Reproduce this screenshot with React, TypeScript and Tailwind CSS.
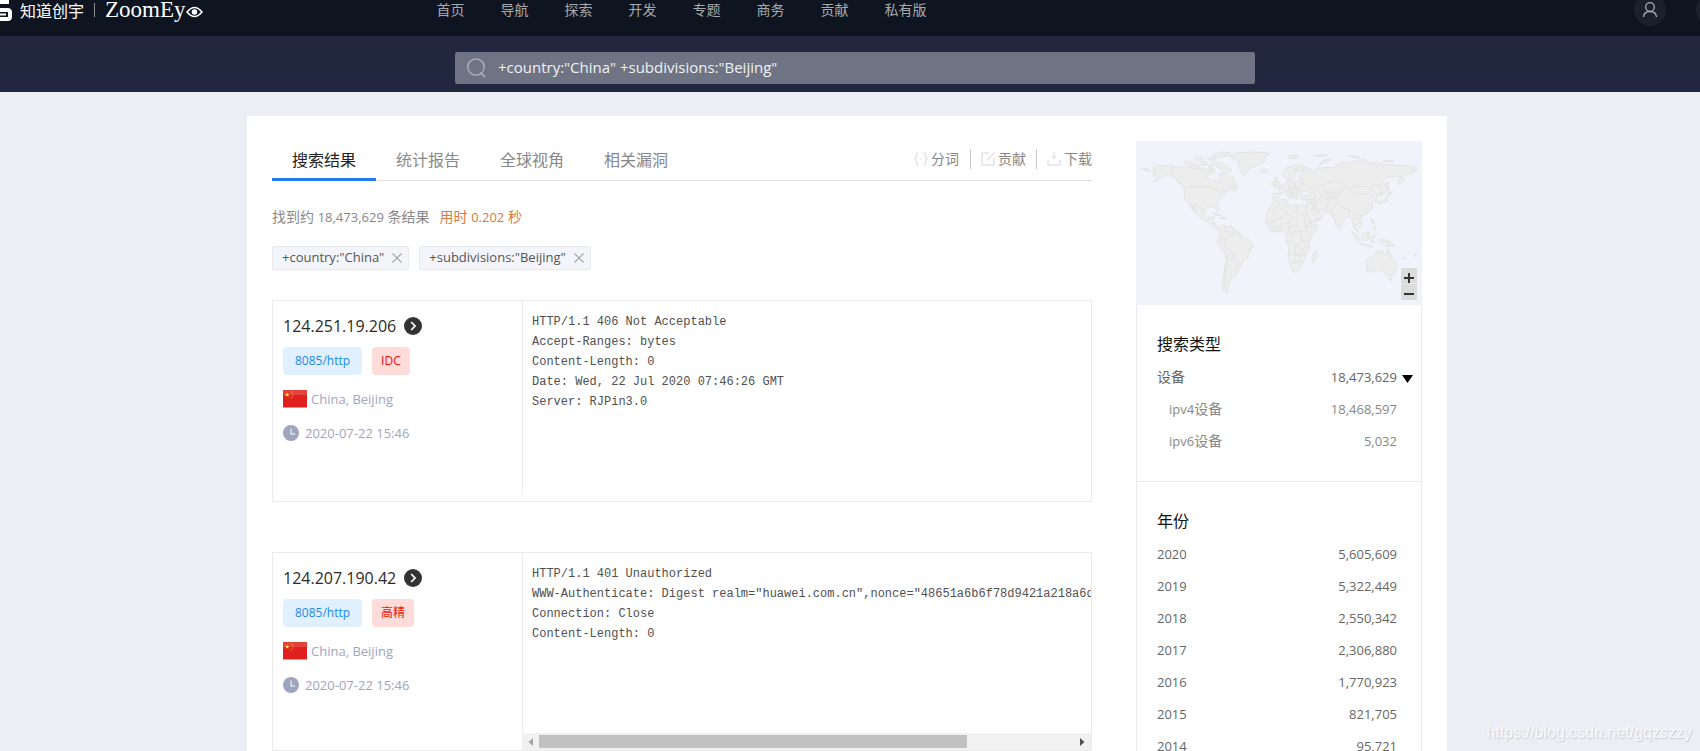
import { useState } from "react";
import type { ReactNode } from "react";

const navItems = ["首页", "导航", "探索", "开发", "专题", "商务", "贡献", "私有版"];
const tabs = ["搜索结果", "统计报告", "全球视角", "相关漏洞"];

interface Host {
  ip: string;
  port: string;
  label: string;
  location: string;
  time: string;
  banner: string;
  wide?: boolean;
}

const hosts: Host[] = [
  {
    ip: "124.251.19.206",
    port: "8085/http",
    label: "IDC",
    location: "China, Beijing",
    time: "2020-07-22 15:46",
    banner: `HTTP/1.1 406 Not Acceptable
Accept-Ranges: bytes
Content-Length: 0
Date: Wed, 22 Jul 2020 07:46:26 GMT
Server: RJPin3.0`,
  },
  {
    ip: "124.207.190.42",
    port: "8085/http",
    label: "高精",
    location: "China, Beijing",
    time: "2020-07-22 15:46",
    banner: `HTTP/1.1 401 Unauthorized
WWW-Authenticate: Digest realm="huawei.com.cn",nonce="48651a6b6f78d9421a218a6de2
Connection: Close
Content-Length: 0`,
    wide: true,
  },
];

const years = [
  { year: "2020", count: "5,605,609" },
  { year: "2019", count: "5,322,449" },
  { year: "2018", count: "2,550,342" },
  { year: "2017", count: "2,306,880" },
  { year: "2016", count: "1,770,923" },
  { year: "2015", count: "821,705" },
  { year: "2014", count: "95,721" },
];

function Header() {
  return (
    <header className="h-9 overflow-hidden bg-[#0e1521]">
      <div className="flex h-5 items-center">
        <a href="#" className="flex shrink-0 items-center text-white">
          <svg width="13" height="21" viewBox="0 0 13 21" fill="none" stroke="#fff" strokeWidth="4" className="mr-[7px]">
            <path d="M0 2H9M0 10H7.500Q10 10 10 12.500V16.500Q10 19 7.500 19H0" />
            <path d="M0 14.500H6" strokeWidth="2" />
          </svg>
          <span className="pt-0.5 text-base leading-5">知道创宇</span>
          <span className="mx-[10px] h-[14px] w-px bg-[#8d8f94]" />
          <span className="flex items-center font-['Liberation_Serif',serif] text-[23px] leading-5">
            ZoomEy
            <svg width="17" height="12" viewBox="0 0 17 12" className="mt-1">
              <path d="M1 6Q8.500-3 16 6Q8.500 15 1 6Z" fill="none" stroke="#fff" strokeWidth="1.500" />
              <circle cx="8.500" cy="6" r="2.800" fill="#fff" />
            </svg>
          </span>
        </a>
        <nav className="ml-[234px] flex gap-9 text-sm text-[#a6a9ad]">
          {navItems.map((item) => (
            <a key={item} href="#" className="whitespace-nowrap">
              {item}
            </a>
          ))}
        </nav>
        <div className="-mr-7 ml-auto flex shrink-0 gap-[30px]">
          <button aria-label="用户" className="flex size-8 items-center justify-center rounded-full bg-[#1b202d]">
            <svg width="16" height="16" viewBox="0 0 16 16" fill="none" stroke="#a9abb1" strokeWidth="1.300">
              <circle cx="8" cy="5" r="4.300" />
              <path d="M1.500 15Q2 9.500 8 9.500T14.500 15" />
            </svg>
          </button>
          <button aria-label="语言" className="size-8 rounded-full bg-[#1b202d]" />
        </div>
      </div>
    </header>
  );
}

function SearchBar() {
  const [query, setQuery] = useState('+country:"China" +subdivisions:"Beijing"');
  return (
    <div className="flex h-14 justify-center bg-[#20273f] pl-[10px] pt-4">
      <label className="flex h-8 w-full max-w-[800px] items-center rounded-xs bg-[#6f7484] pl-3">
        <svg width="19" height="20" viewBox="0 0 19 20" fill="none" stroke="#b5b8c2" strokeWidth="1.200">
          <circle cx="9" cy="9" r="8.200" />
          <path d="M14 15L18 19" />
        </svg>
        <input
          aria-label="搜索"
          value={query}
          onChange={(e) => setQuery(e.target.value)}
          className="ml-3 h-8 flex-1 bg-transparent pb-0.5 text-[15px] text-[#f0f1f3] outline-none"
        />
      </label>
    </div>
  );
}

function Tools() {
  return (
    <div className="flex items-center pb-1 text-sm leading-5 text-[#888]">
      <button className="flex items-center gap-[3px] pr-[11px]">
        <svg width="14" height="14" viewBox="0 0 14 14" fill="none" stroke="#e3e4e8" strokeWidth="1.500">
          <path d="M4.500 1H4Q2.500 1 2.500 3V5L1 7L2.500 9V11Q2.500 13 4 13H4.500M9.500 1H10Q11.500 1 11.500 3V5L13 7L11.500 9V11Q11.500 13 10 13H9.500M6.200 7H7.800" />
        </svg>
        分词
      </button>
      <button className="flex items-center gap-[3px] border-l border-[#c8c8c8] px-[10px]">
        <svg width="14" height="14" viewBox="0 0 14 14" fill="none" stroke="#e3e4e8" strokeWidth="1.500">
          <path d="M8 1H1V13H13V6M5 9L13 1" />
        </svg>
        贡献
      </button>
      <button className="flex items-center gap-[3px] border-l border-[#c8c8c8] pl-[10px]">
        <svg width="14" height="14" viewBox="0 0 14 14" fill="none" stroke="#e3e4e8" strokeWidth="1.500">
          <path d="M1 8V13H13V8M7 0V4" />
          <path d="M4 4H10L7 7.500Z" fill="#e3e4e8" stroke="none" />
        </svg>
        下载
      </button>
    </div>
  );
}

function FilterTag({ text }: { text: string }) {
  return (
    <span className="flex h-6 items-center gap-2 rounded-xs border border-[#e8e9ee] bg-[#f4f5fb] pl-[9px] pr-[6px] text-[13px] text-[#555]">
      {text}
      <button aria-label={`移除 ${text}`}>
        <svg width="10" height="10" viewBox="0 0 10 10" stroke="#a8a8a8" strokeWidth="1.200">
          <path d="M0.500 0.500L9.500 9.500M9.500 0.500L0.500 9.500" />
        </svg>
      </button>
    </span>
  );
}

function Flag() {
  return (
    <svg width="24" height="18" viewBox="0 0 23 18" preserveAspectRatio="none">
      <rect width="23" height="18" fill="#e0201f" />
      <rect width="23" height="5" fill="#e85a50" opacity="0.6" />
      <rect y="17" width="23" height="1" fill="#c9a3a0" />
      <path d="M4 2.500L4.600 4.100H6.300L5 5.100L5.400 6.700L4 5.800L2.600 6.700L3 5.100L1.700 4.100H3.400Z" fill="#fbe13c" />
      <path d="M7.500 1.500h1v1h-1zM9 3.300h1v1h-1zM9 5.500h1v1h-1zM7.500 7.200h1v1h-1z" fill="#f2b233" />
    </svg>
  );
}

function HScroll() {
  return (
    <div aria-hidden className="flex h-[17px] items-center bg-[#f1f1f1] px-[6px]">
      <svg width="5" height="8" viewBox="0 0 5 8" fill="#a3a3a3">
        <path d="M5 0V8L0.500 4Z" />
      </svg>
      <div className="mx-[6px] flex-1">
        <div className="h-[13px] w-4/5 bg-[#c1c1c1]" />
      </div>
      <svg width="5" height="8" viewBox="0 0 5 8" fill="#505050">
        <path d="M0 0V8L4.500 4Z" />
      </svg>
    </div>
  );
}

function HostCard({ host }: { host: Host }) {
  return (
    <article className="flex border border-[#ebebeb]">
      <div className="h-[193px] w-[249px] shrink-0 pl-[10px] pt-3">
        <h2 className="flex items-center gap-2 text-base leading-[26px] font-medium text-[#2b2b2b]">
          {host.ip}
          <a href="#" aria-label="详情">
            <svg width="18" height="18" viewBox="0 0 18 18" fill="none">
              <circle cx="9" cy="9" r="9" fill="#333" />
              <path d="M7.200 5L11 9L7.200 13" stroke="#fff" strokeWidth="1.800" />
            </svg>
          </a>
        </h2>
        <div className="mt-2 flex gap-[10px] text-xs leading-7">
          <a href="#" className="rounded bg-[#e1f0ff] px-3 text-[#1b8aea]">
            {host.port}
          </a>
          <span className="rounded bg-[#fddcda] px-[9px] text-[#f5130c]">{host.label}</span>
        </div>
        <p className="mt-[14px] flex items-center gap-1 text-[13px] leading-5 text-[#9fa4bf]">
          <Flag />
          {host.location}
        </p>
        <p className="mt-[14px] flex items-center gap-[6px] text-[13px] leading-5 text-[#9fa4bf]">
          <svg width="16" height="16" viewBox="0 0 16 16" fill="none">
            <circle cx="8" cy="8" r="8" fill="#9fa4bf" />
            <path d="M8 3.500V9H12" stroke="#dfe1ec" strokeWidth="1.500" />
          </svg>
          {host.time}
        </p>
      </div>
      <div className={host.wide ? "flex min-w-0 flex-1 flex-col" : "mb-[7px] flex min-w-0 flex-1 flex-col"}>
        <pre
          className={
            host.wide
              ? "h-[180px] overflow-hidden border-l border-[#ebebeb] pl-[9px] pt-[11px] font-['Liberation_Mono',monospace] text-xs leading-5 text-[#505050]"
              : "h-[193px] overflow-hidden border-l border-[#ebebeb] pl-[9px] pt-[11px] font-['Liberation_Mono',monospace] text-xs leading-5 text-[#505050]"
          }
        >
          {host.banner}
        </pre>
        {host.wide && <HScroll />}
      </div>
    </article>
  );
}

function WorldMap() {
  return (
    <svg viewBox="48 33 858 492" className="block w-full" strokeLinejoin="round" aria-label="世界地图">
      <rect x="48" y="33" width="858" height="492" fill="#f1f2fa" />
      <g fill="#ededed" stroke="#dedede" strokeWidth="2">
        {/* North America */}
        <path d="M98 113L112 105L130 108L155 108L172 113L190 109L215 114L235 117L250 113L262 120L275 113L285 121L275 128L262 137L264 145L278 149L290 151L297 160L303 148L297 138L302 128L318 130L326 142L336 138L346 156L352 163L342 168L328 168L335 174L352 170L352 178L338 182L328 180L318 189L308 195L304 206L297 214L289 223L299 240L292 243L283 230L262 232L254 244L255 260L268 264L274 258L283 262L278 272L287 280L289 290L298 294L292 300L280 292L272 280L258 272L240 264L230 246L217 225L228 248L220 243L208 222L197 212L192 195L192 172L180 162L166 144L150 136L128 138L118 148L100 156L116 142L98 136L104 128L96 122L108 118Z" />
        <path d="M64 114L80 116L92 124L78 124Z" />
        <path d="M325 76L350 69L385 66L430 67L448 72L434 82L432 96L412 106L398 112L385 120L376 138L364 130L356 112L360 98L345 86Z" />
        <path d="M190 98L210 92L218 100L202 106ZM208 108L228 102L240 110L222 116ZM226 84L246 80L252 88L232 92ZM240 96L256 94L262 104L246 106ZM262 86L278 80L290 84L274 92ZM278 74L300 66L332 68L318 78L296 82ZM284 96L304 98L322 110L336 122L322 128L308 120L292 112L276 102ZM266 122L280 120L284 126L272 130ZM264 106L274 104L278 112L268 114Z" />
        <path d="M421 122L434 118L446 122L440 128L426 129Z" />
        <path d="M277 252L292 250L304 258L290 256ZM304 262L320 264L316 268L304 267Z" />
        {/* South America */}
        <path d="M300 290L310 284L320 290L336 290L345 300L360 308L364 322L384 328L398 340L396 352L386 366L384 382L368 394L362 410L352 428L346 436L338 440L336 448L328 454L326 466L320 476L326 489L312 484L306 470L308 450L314 420L318 392L317 376L302 355L292 338L294 325L300 308Z" />
        {/* Africa */}
        <path d="M462 213L478 210L497 208L502 220L518 227L530 222L554 226L558 240L566 262L574 286L595 286L588 302L574 322L566 336L569 360L556 374L553 392L540 414L530 424L520 427L514 410L506 384L504 372L508 352L498 334L502 312L486 302L470 306L456 304L444 290L438 276L440 250L450 232Z" />
        <path d="M590 360L593 370L586 396L578 399L576 384L580 370Z" />
        {/* Europe and Asia */}
        <path d="M457 191L478 190L478 180L470 174L486 170L495 160L502 154L505 146L510 156L530 154L540 150L546 141L536 138L548 130L552 122L546 112L560 113L574 118L566 128L578 124L586 117L610 113L640 112L654 106L660 96L690 98L712 92L735 88L748 100L776 99L800 104L840 107L860 106L888 111L889 122L876 124L880 131L858 132L849 140L852 150L838 165L834 154L844 138L828 140L806 140L790 152L788 158L804 168L800 186L786 194L776 196L770 206L774 218L766 216L762 204L752 198L748 206L757 214L756 234L744 250L728 256L720 266L728 284L720 294L708 280L706 288L716 308L706 300L700 286L698 270L688 256L680 262L668 274L662 290L660 301L650 290L642 266L634 250L616 246L604 240L594 240L602 248L612 254L602 268L574 280L566 262L556 236L562 216L560 208L545 210L534 202L528 198L532 210L520 202L512 190L502 182L516 202L508 206L496 186L486 188L478 200L468 208L458 206Z" />
        <path d="M489 138L488 126L500 114L520 106L540 104L549 110L546 122L534 128L532 120L524 130L522 144L512 152L508 140L496 143Z" />
        <path d="M464 142L472 144L474 154L482 162L478 168L462 170L468 158ZM454 158L462 154L462 164L454 166Z" />
        <path d="M596 108L606 94L626 86L634 88L612 98ZM684 76L706 78L720 84L704 84ZM502 80L520 76L538 78L524 86L508 86ZM584 76L624 74L612 78L590 78ZM790 92L820 90L822 94L796 96Z" />
        <path d="M800 154L806 166L806 180L800 170Z" />
        <path d="M804 190L816 186L812 194L804 196ZM800 198L804 206L800 216L784 220L774 224L780 214L792 210Z" />
        {/* South-east Asia and Oceania */}
        <path d="M695 304L706 312L720 328L720 338L708 328ZM720 340L744 346L758 350L738 348ZM728 316L744 306L750 312L744 330L730 332L726 322ZM752 322L768 318L758 326L762 338L754 336ZM752 266L760 268L762 282L756 280ZM758 290L768 292L764 302ZM778 328L796 330L812 336L828 350L812 346L802 350L790 344L782 338Z" />
        <path d="M736 392L752 382L766 368L780 362L790 364L790 372L800 376L804 356L812 370L816 382L826 394L830 410L822 434L806 438L796 430L788 424L770 420L754 426L740 424L742 410Z" />
        <path d="M806 444L816 446L812 454ZM850 382L860 388L856 390ZM884 372L888 378L884 378Z" />
      </g>
      {/* inland seas */}
      <g fill="#f1f2fa" stroke="#dedede" strokeWidth="2">
        <path d="M540 188L552 184L566 186L578 192L566 196L546 196Z" />
        <path d="M586 182L596 180L594 190L602 200L598 208L588 200Z" />
      </g>
      {/* country borders */}
      <g fill="none" stroke="#dcdcdc" strokeWidth="2">
        <path d="M155 108V137L170 146L182 162M192 172H268L286 178L300 188L318 182L332 172M208 222L228 224L242 234L254 246M262 272L270 264M276 280L286 280" />
        <path d="M316 288L314 302L328 306L330 318L316 326L312 340L300 330M336 292L344 304L342 314L330 318M352 306V318H364M312 340L322 356L336 366L342 380L354 398L350 410L362 412M300 322L312 324M316 362L322 386L334 388L342 380M322 386L316 430L314 474M346 412L348 430M334 388L346 402" />
        <path d="M478 212L474 228L450 240M474 228L500 250L520 262M497 210L502 244L500 250M532 224V284M502 248L486 262L462 274L440 272M462 240L464 274L448 284M532 252H558M556 262L552 286L574 290M486 262L484 282L510 280L512 264M510 280L504 306M532 284L512 290L506 310M532 284L540 304L566 306L574 322M504 318L518 314L520 304L540 304M540 304L546 330L566 338M500 336H516L526 346L546 356L568 350M546 330L540 344L526 346L526 374H506M526 374L522 398H512M526 374L544 378L556 376M540 364L544 378L534 396L522 398M534 396L552 396M540 356L554 362M456 286V304M468 284V306M476 284V304M484 282V302M558 288L562 304" />
        <path d="M470 190L486 192M486 172L498 182L510 178L540 184M504 154L506 174M524 154L526 170L510 178M546 142L548 160L540 176L526 170M548 160L574 170L566 184M526 130L526 118L536 108M516 182L518 196L534 196M510 170L524 172M530 172L534 192M506 186L524 188M518 168L530 178" />
        <path d="M586 182L584 172L614 162L640 152L668 158L676 168L660 188L640 186L620 188L606 180M676 168L690 176L704 168L740 170L756 178L740 192L704 192L680 178L676 168M756 178L760 162L778 166L786 190L772 196M660 188L650 200L654 220L672 234L690 240L700 246M690 240L688 258M602 188L622 200L640 204L650 200M606 206L626 210L640 204M626 210L618 244M654 220L640 232L630 248M584 202L590 238M560 222L580 218L590 236M562 208L584 206M572 212L580 230L574 238L600 248M700 246L704 270M700 256L716 252L728 258M708 262L720 270L718 282M672 234L688 240M584 270L606 262M740 310L744 320M804 332V350M574 170L584 172M618 190L632 196L650 196" />
      </g>
    </svg>
  );
}

function FacetSection({ title, children }: { title: string; children: ReactNode }) {
  return (
    <section className="border-x border-b border-[#ebebeb] pb-6 pl-5 pr-6 pt-[22px]">
      <h3 className="text-base leading-[34px] text-[#111]">{title}</h3>
      <ul className="text-[13px] leading-8 text-[#666]">{children}</ul>
    </section>
  );
}

function Sidebar() {
  return (
    <aside className="w-[286px] shrink-0">
      <div className="relative">
        <WorldMap />
        <div className="absolute bottom-[5px] right-[5px] flex w-4 flex-col bg-[#dcdcdc]">
          <button aria-label="放大" className="flex h-4 items-end justify-center border-b border-[#e6e6e6]">
            <svg width="10" height="10" viewBox="0 0 10 10" stroke="#333" strokeWidth="2">
              <path d="M0 5H10M5 0V10" />
            </svg>
          </button>
          <button aria-label="缩小" className="flex h-4 items-center justify-center pt-1">
            <svg width="10" height="4" viewBox="0 0 10 4" stroke="#333" strokeWidth="2">
              <path d="M0 2H10" />
            </svg>
          </button>
        </div>
      </div>
      <FacetSection title="搜索类型">
        <li className="relative">
          <a href="#" className="flex justify-between">
            <span className="text-sm leading-8">设备</span>
            <span>18,473,629</span>
          </a>
          <svg width="11" height="8" viewBox="0 0 11 8" className="absolute -right-4 top-[14px]">
            <path d="M0 0H11L5.500 8Z" />
          </svg>
        </li>
        {["4", "6"].map((v) => (
          <li key={v}>
            <a href="#" className="flex justify-between pl-3 text-[#888]">
              <span>
                ipv{v}
                <span className="text-sm leading-8">设备</span>
              </span>
              <span>{v === "4" ? "18,468,597" : "5,032"}</span>
            </a>
          </li>
        ))}
      </FacetSection>
      <FacetSection title="年份">
        {years.map(({ year, count }) => (
          <li key={year}>
            <a href="#" className="flex justify-between">
              <span>{year}</span>
              <span>{count}</span>
            </a>
          </li>
        ))}
      </FacetSection>
    </aside>
  );
}

export default function App() {
  const [active, setActive] = useState(tabs[0]);
  return (
    <div className="relative h-screen overflow-hidden bg-[#edeef4] font-['Open_Sans','Noto_Sans_CJK_SC',sans-serif]">
      <Header />
      <SearchBar />
      <div className="pr-[6px] pt-6">
        <div className="mx-auto flex max-w-[1200px] items-start gap-11 bg-white p-[25px]">
          <main className="min-w-0 flex-1">
            <div className="flex h-10 justify-between border-b border-[#e2e2e2]">
              <div className="flex" role="tablist">
                {tabs.map((tab) => (
                  <button
                    key={tab}
                    role="tab"
                    aria-selected={tab === active}
                    onClick={() => setActive(tab)}
                    className={
                      tab === active
                        ? "h-10 border-b-[3px] border-[#247be6] px-5 text-base text-[#222]"
                        : "h-10 border-b-[3px] border-transparent px-5 text-base text-[#888]"
                    }
                  >
                    {tab}
                  </button>
                ))}
              </div>
              <Tools />
            </div>
            <p className="mt-[26px] text-sm leading-5 text-[#888]">
              找到约 <span className="text-[13px]">18,473,629</span> 条结果
              <span className="ml-[10px] text-[#d9793f]">
                用时 <span className="text-[13px]">0.202</span> 秒
              </span>
            </p>
            <div className="mt-[19px] flex gap-[10px]">
              <FilterTag text='+country:"China"' />
              <FilterTag text='+subdivisions:"Beijing"' />
            </div>
            <div className="mt-[30px] flex flex-col gap-[50px]">
              {hosts.map((host) => (
                <HostCard key={host.ip} host={host} />
              ))}
            </div>
          </main>
          <Sidebar />
        </div>
      </div>
      <p className="absolute bottom-2 right-2 font-['Liberation_Sans',sans-serif] text-base leading-5 text-white/80 [text-shadow:1px_1px_1px_#c9cad0]">
        https://blog.csdn.net/gqzszzy
      </p>
    </div>
  );
}
